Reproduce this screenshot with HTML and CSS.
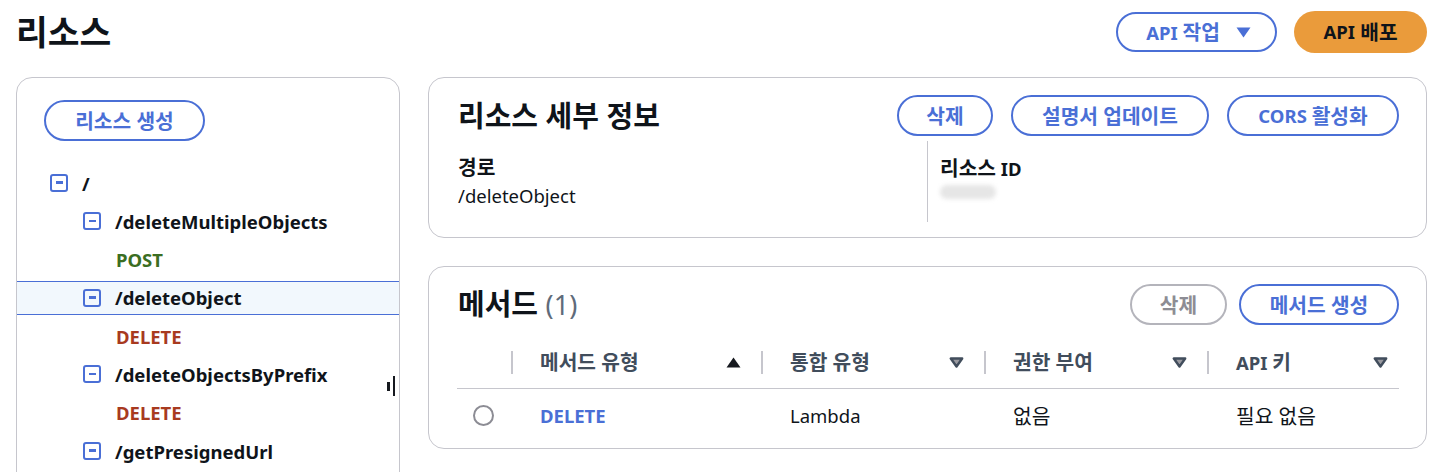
FILE: index.html
```html
<!DOCTYPE html>
<html lang="ko">
<head>
<meta charset="utf-8">
<title>리소스</title>
<link rel="stylesheet" href="styles.css">
</head>
<body>
<div class="page">
  <header class="top">
    <h1 class="page-title">리소스</h1>
    <div class="top-actions">
      <button class="btn btn-outline btn-top"><span>API <span class="ko">작업</span></span>
        <svg class="caret" width="15" height="11" viewBox="0 0 15 11"><path d="M0.5 0.5 H14.5 L7.5 10.5 Z" fill="#4a6fd6"/></svg>
      </button>
      <button class="btn btn-primary">API <span class="ko">&nbsp;배포</span></button>
    </div>
  </header>

  <div class="main">
    <aside class="panel tree-panel">
      <button class="btn btn-outline btn-create ko">리소스 생성</button>
      <ul class="tree">
        <li class="row depth0"><span class="minus"></span><span class="path">/</span></li>
        <li class="row depth1"><span class="minus"></span><span class="path">/deleteMultipleObjects</span></li>
        <li class="row depth2"><span class="verb post">POST</span></li>
        <li class="row depth1 selected"><span class="minus"></span><span class="path">/deleteObject</span></li>
        <li class="row depth2"><span class="verb del">DELETE</span></li>
        <li class="row depth1"><span class="minus"></span><span class="path">/deleteObjectsByPrefix</span></li>
        <li class="row depth2"><span class="verb del">DELETE</span></li>
        <li class="row depth1"><span class="minus"></span><span class="path">/getPresignedUrl</span></li>
      </ul>
      <div class="resize-handle"><span class="bar short"></span><span class="bar long"></span></div>
    </aside>

    <div class="right">
      <section class="card details">
        <div class="card-head">
          <h2 class="card-title">리소스 세부 정보</h2>
          <div class="card-actions">
            <button class="btn btn-outline btn-sm w-del ko">삭제</button>
            <button class="btn btn-outline btn-sm w-doc ko">설명서 업데이트</button>
            <button class="btn btn-outline btn-sm w-cors">CORS&nbsp;<span class="ko">활성화</span></button>
          </div>
        </div>
        <div class="kv">
          <div class="kv-col">
            <div class="kv-label ko">경로</div>
            <div class="kv-value">/deleteObject</div>
          </div>
          <div class="kv-col kv-col-div">
            <div class="kv-label"><span class="ko">리소스</span> ID</div>
            <div class="kv-value"><span class="redacted"></span></div>
          </div>
        </div>
      </section>

      <section class="card methods">
        <div class="card-head">
          <h2 class="card-title">메서드 <span class="count">(1)</span></h2>
          <div class="card-actions">
            <button class="btn btn-disabled btn-sm w-del2 ko">삭제</button>
            <button class="btn btn-outline btn-sm w-make ko">메서드 생성</button>
          </div>
        </div>
        <div class="table">
          <div class="th th-first"></div>
          <div class="th"><span class="ko">메서드 유형</span>
            <svg width="15" height="11" viewBox="0 0 15 11"><path d="M7.5 0.5 L14.5 10.5 H0.5 Z" fill="#16191f"/></svg>
          </div>
          <div class="th"><span class="ko">통합 유형</span>
            <svg width="15" height="11" viewBox="0 0 15 11"><path d="M1.8 1.5 H13.2 L7.5 9.5 Z" fill="#9a9aa0" stroke="#414d5c" stroke-width="2.4" stroke-linejoin="round"/></svg>
          </div>
          <div class="th"><span class="ko">권한 부여</span>
            <svg width="15" height="11" viewBox="0 0 15 11"><path d="M1.8 1.5 H13.2 L7.5 9.5 Z" fill="#9a9aa0" stroke="#414d5c" stroke-width="2.4" stroke-linejoin="round"/></svg>
          </div>
          <div class="th th-last"><span>API <span class="ko">키</span></span>
            <svg width="15" height="11" viewBox="0 0 15 11"><path d="M1.8 1.5 H13.2 L7.5 9.5 Z" fill="#9a9aa0" stroke="#414d5c" stroke-width="2.4" stroke-linejoin="round"/></svg>
          </div>

          <div class="td td-first"><span class="radio"></span></div>
          <div class="td"><span class="link">DELETE</span></div>
          <div class="td">Lambda</div>
          <div class="td ko">없음</div>
          <div class="td ko">필요 없음</div>
        </div>
      </section>
    </div>
  </div>
</div>
</body>
</html>
```

FILE: styles.css
```css
* { box-sizing: border-box; }
html, body { margin: 0; padding: 0; }
body {
  font-family: "Noto Sans", "Noto Sans CJK KR", sans-serif;
  font-size: 18.5px;
  color: #16191f;
  background: #ffffff;
  overflow: hidden;
}
.page { width: 1443px; }
.ko { font-size: 20.3px; }

.top {
  height: 64px;
  padding: 0 16px;
  display: flex;
  align-items: center;
  justify-content: space-between;
}
.page-title {
  margin: 0;
  font-size: 34.5px;
  line-height: 40px;
  font-weight: 700;
  color: #0f141a;
}
.top-actions { display: flex; align-items: center; gap: 17px; }

.btn {
  font-family: inherit;
  font-weight: 700;
  font-size: 18.5px;
  line-height: 24px;
  border-radius: 21px;
  background: #fff;
  display: inline-flex;
  align-items: center;
  justify-content: center;
  padding: 0;
  cursor: pointer;
}
.btn.ko { font-size: 20.3px; }
.btn-outline { border: 2px solid #4a6fd6; color: #4a6fd6; }
.btn-disabled { border: 2px solid #b4b4bb; color: #8d8d94; }
.btn-primary {
  background: #ea9b3b;
  border: none;
  color: #0f141a;
  height: 42px;
  width: 133px;
}
.btn-top { height: 40px; width: 161px; gap: 16px; padding-left: 4px; }
.caret { display: block; }

.main {
  margin-top: 13px;
  padding: 0 16px;
  display: grid;
  grid-template-columns: 384px 1fr;
  gap: 28px;
  align-items: start;
}

.panel {
  border: 1px solid #c6c6cd;
  border-radius: 16px;
}
.tree-panel {
  position: relative;
  height: 440px;
  padding-top: 22px;
}
.btn-create { height: 41px; width: 161px; margin-left: 27px; }

.tree {
  list-style: none;
  margin: 25px 0 0 0;
  padding: 0;
  display: flex;
  flex-direction: column;
  gap: 4.3px;
}
.row {
  height: 34px;
  display: flex;
  align-items: center;
  gap: 14px;
  font-weight: 700;
  font-size: 18.5px;
}
.depth0 { padding-left: 33px; }
.depth1 { padding-left: 66px; }
.depth2 { padding-left: 99px; }
.row.selected {
  background: #f2f8fd;
  border-top: 1px solid #4a6fd6;
  border-bottom: 1px solid #4a6fd6;
}
.minus {
  width: 18px;
  height: 18px;
  border: 2.5px solid #4a6fd6;
  border-radius: 3px;
  position: relative;
  flex: none;
}
.minus::after {
  content: "";
  position: absolute;
  left: 3.5px;
  right: 3.5px;
  top: 5.3px;
  height: 2.4px;
  background: #4a6fd6;
}
.path { color: #0f141a; }
.verb { font-weight: 700; }
.post { color: #3b6e22; }
.del { color: #a83a1f; }

.resize-handle {
  position: absolute;
  left: 370px;
  top: 298px;
  display: flex;
  align-items: center;
  gap: 3px;
}
.bar { display: block; width: 2.5px; background: #16191f; }
.bar.short { height: 9px; }
.bar.long { height: 20px; }

.right { display: flex; flex-direction: column; gap: 28px; }
.card {
  border: 1px solid #c6c6cd;
  border-radius: 16px;
  padding: 17px 27px 0 29px;
}
.details { height: 161px; }
.methods { height: 183px; }
.card-head {
  display: flex;
  align-items: center;
  justify-content: space-between;
  height: 41px;
}
.card-title {
  margin: 0;
  font-size: 29px;
  font-weight: 700;
  line-height: 36px;
  color: #0f141a;
}
.count { font-weight: 400; color: #5f6b7a; font-size: 27px; }
.card-actions { display: flex; gap: 18px; }
.btn-sm { height: 41px; }
.w-del { width: 96px; }
.w-doc { width: 198px; }
.w-cors { width: 172px; }
.w-del2 { width: 97px; }
.w-make { width: 160px; }
.card-actions .w-del2 { margin-right: -6px; }

.kv {
  margin-top: 5px;
  height: 81px;
  display: grid;
  grid-template-columns: 469px 1fr;
}
.kv-col { padding-top: 14px; }
.kv-col-div { border-left: 1px solid #c6c6cd; padding-left: 12px; padding-top: 15px; }
.kv-label { font-weight: 700; line-height: 24px; height: 24px; color: #0f141a; }
.kv-value { line-height: 24px; margin-top: 5px; color: #0f141a; }
.redacted {
  display: block;
  width: 56px;
  height: 14px;
  margin-top: 5px;
  border-radius: 7px;
  background: #e6e6e6;
  filter: blur(2px);
}

.table {
  margin-top: 14px;
  margin-left: -1px;
  display: grid;
  grid-template-columns: 54px 250px 223px 223px 192px;
}
.th {
  height: 50px;
  padding: 12px 0 14px 0;
  border-bottom: 1px solid #c6c6cd;
  display: flex;
  line-height: 23px;
}
.th:not(.th-first) {
  justify-content: space-between;
  align-items: center;
  font-weight: 700;
  color: #414d5c;
  padding-right: 20px;
  position: relative;
  padding-left: 29px;
}
.th:not(.th-first)::before {
  content: "";
  position: absolute;
  left: 0;
  top: 12px;
  height: 23px;
  width: 2px;
  background: #c6c6cd;
}
.th-last { padding-right: 11px !important; }
.td {
  height: 52px;
  display: flex;
  align-items: center;
  padding-left: 29px;
  color: #0f141a;
}
.td-first { padding-left: 16px; }
.radio {
  width: 21px;
  height: 21px;
  border: 2px solid #8c8c94;
  border-radius: 50%;
}
.link { color: #4a6fd6; font-weight: 700; }
```
